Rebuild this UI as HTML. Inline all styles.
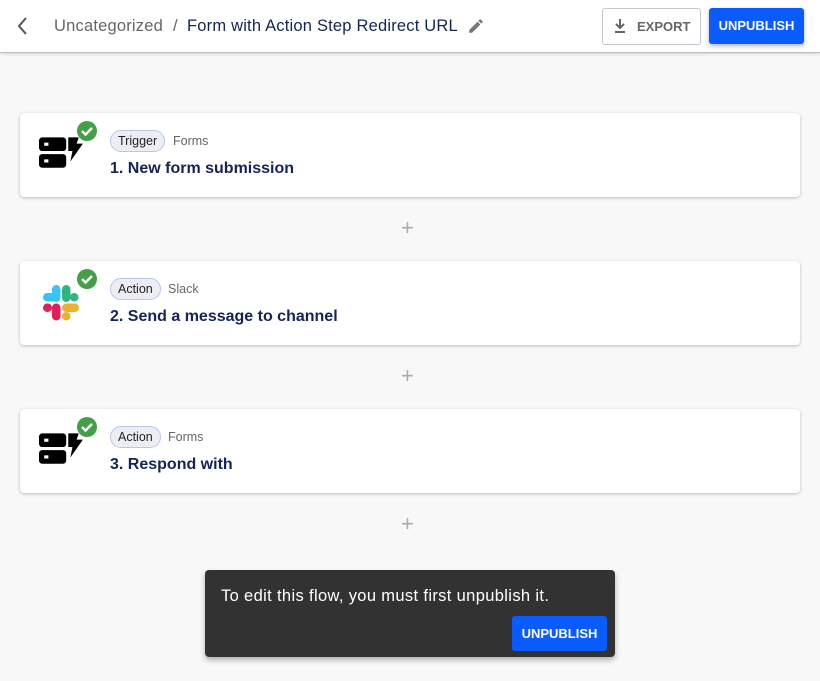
<!DOCTYPE html>
<html><head><style>
body{margin:0;width:820px;height:681px;background:#f8f8f8;font-family:"Liberation Sans",sans-serif;position:relative;overflow:hidden}
.hdr{position:absolute;left:0;top:0;width:820px;height:52px;background:#fff;border-bottom:1px solid #bdbdbd;box-shadow:0 1px 3px rgba(0,0,0,.15)}
.card{position:absolute;left:20px;width:780px;height:84px;background:#fff;border-radius:4px;box-shadow:0 1px 3px rgba(0,0,0,.25)}
.chip{position:absolute;left:90px;top:17px;height:20px;line-height:20px;padding:0 7px;border:1px solid #b8c6ef;background:#eceef3;border-radius:11px;font-size:12.5px;color:#222}
.app{position:absolute;top:21px;font-size:12.5px;color:#666}
.title{position:absolute;left:90px;top:47px;font-size:16px;font-weight:bold;color:#152456}
.check{position:absolute;left:56px;top:7px}
.plus{position:absolute;left:401px;font-size:22px;color:#aaa;font-weight:300}
</style></head><body>
<div class="hdr">
<svg style="position:absolute;left:14px;top:16px" width="16" height="20"><path d="M12 2 L5 10 L12 18" stroke="#555" stroke-width="2" fill="none"/></svg>
<span style="position:absolute;left:54px;top:17px;font-size:16.5px;color:#666;letter-spacing:0.2px">Uncategorized</span>
<span style="position:absolute;left:173px;top:17px;font-size:16.5px;color:#666">/</span>
<span style="position:absolute;left:187px;top:17px;font-size:16.5px;color:#152456;letter-spacing:0.2px">Form with Action Step Redirect URL</span>
<svg style="position:absolute;left:467px;top:17px" width="18" height="18" viewBox="0 0 24 24"><path d="M3 17.25V21h3.75L17.8 9.94l-3.75-3.75L3 17.25zM20.7 7.04a1 1 0 0 0 0-1.41l-2.34-2.34a1 1 0 0 0-1.41 0l-1.83 1.83 3.75 3.75 1.83-1.83z" fill="#777"/></svg>
<div style="position:absolute;left:602px;top:8px;width:97px;height:35px;border:1px solid #c4c7d0;border-radius:3px;background:#fff"></div>
<svg style="position:absolute;left:613px;top:18px" width="14" height="16"><path d="M7 1v9M3 6l4 4 4-4M2 14h10" stroke="#666" stroke-width="2" fill="none"/></svg>
<span style="position:absolute;left:637px;top:19px;font-size:13px;font-weight:bold;color:#666">EXPORT</span>
<div style="position:absolute;left:709px;top:8px;width:95px;height:36px;background:#0a5cff;border-radius:3px;box-shadow:0 2px 4px rgba(0,0,0,.3);color:#fff;font-size:13px;font-weight:bold;text-align:center;line-height:36px">UNPUBLISH</div>
</div>

<div class="card" style="top:113px">
<svg style="position:absolute;left:19px;top:15px" width="46" height="46" viewBox="0 0 44 44"><rect x="0" y="9" width="26" height="13" rx="3" fill="#000"/><rect x="0" y="25" width="26" height="13" rx="3" fill="#000"/><rect x="5" y="14" width="4" height="3" fill="#fff"/><rect x="5" y="30" width="4" height="3" fill="#fff"/><path d="M28 9h10l-2 6 6 0-12 17 2-10h-4z" fill="#000"/></svg>
<svg class="check" width="22" height="22"><circle cx="11" cy="11" r="10" fill="#43a047"/><path d="M6 11l3.5 3.5L16 8" stroke="#fff" stroke-width="2.4" fill="none"/></svg>
<span class="chip">Trigger</span><span class="app" style="left:153px">Forms</span>
<div class="title">1. New form submission</div>
</div>
<div class="plus" style="top:215px">+</div>

<div class="card" style="top:261px">
<svg style="position:absolute;left:23px;top:24px" width="36" height="36" viewBox="0 0 36 36">
<rect x="0" y="8" width="17" height="8.5" rx="4.25" fill="#36c5f0"/>
<rect x="9" y="0" width="8.5" height="17" rx="4.25" fill="#36c5f0"/>
<rect x="19" y="0" width="8.5" height="17" rx="4.25" fill="#2eb67d"/>
<rect x="27" y="8" width="8.5" height="8.5" rx="4.25" fill="#2eb67d"/>
<rect x="19" y="18.5" width="17" height="8.5" rx="4.25" fill="#ecb22e"/>
<rect x="19" y="27" width="8.5" height="8.5" rx="4.25" fill="#ecb22e"/>
<rect x="9" y="18.5" width="8.5" height="17" rx="4.25" fill="#e01e5a"/>
<rect x="0" y="18.5" width="9" height="8.5" rx="4.25" fill="#e01e5a"/>
</svg>
<svg class="check" width="22" height="22"><circle cx="11" cy="11" r="10" fill="#43a047"/><path d="M6 11l3.5 3.5L16 8" stroke="#fff" stroke-width="2.4" fill="none"/></svg>
<span class="chip">Action</span><span class="app" style="left:148px">Slack</span>
<div class="title">2. Send a message to channel</div>
</div>
<div class="plus" style="top:363px">+</div>

<div class="card" style="top:409px">
<svg style="position:absolute;left:19px;top:15px" width="46" height="46" viewBox="0 0 44 44"><rect x="0" y="9" width="26" height="13" rx="3" fill="#000"/><rect x="0" y="25" width="26" height="13" rx="3" fill="#000"/><rect x="5" y="14" width="4" height="3" fill="#fff"/><rect x="5" y="30" width="4" height="3" fill="#fff"/><path d="M28 9h10l-2 6 6 0-12 17 2-10h-4z" fill="#000"/></svg>
<svg class="check" width="22" height="22"><circle cx="11" cy="11" r="10" fill="#43a047"/><path d="M6 11l3.5 3.5L16 8" stroke="#fff" stroke-width="2.4" fill="none"/></svg>
<span class="chip">Action</span><span class="app" style="left:148px">Forms</span>
<div class="title">3. Respond with</div>
</div>
<div class="plus" style="top:511px">+</div>

<div style="position:absolute;left:205px;top:570px;width:410px;height:87px;background:#323232;border-radius:4px;box-shadow:0 3px 6px rgba(0,0,0,.3)">
<span style="position:absolute;left:16px;top:17px;font-size:16.5px;color:#fff;letter-spacing:0.35px">To edit this flow, you must first unpublish it.</span>
<div style="position:absolute;left:307px;top:46px;width:95px;height:35px;background:#0a5cff;border-radius:3px;color:#fff;font-size:13px;font-weight:bold;text-align:center;line-height:35px">UNPUBLISH</div>
</div>
</body></html>
